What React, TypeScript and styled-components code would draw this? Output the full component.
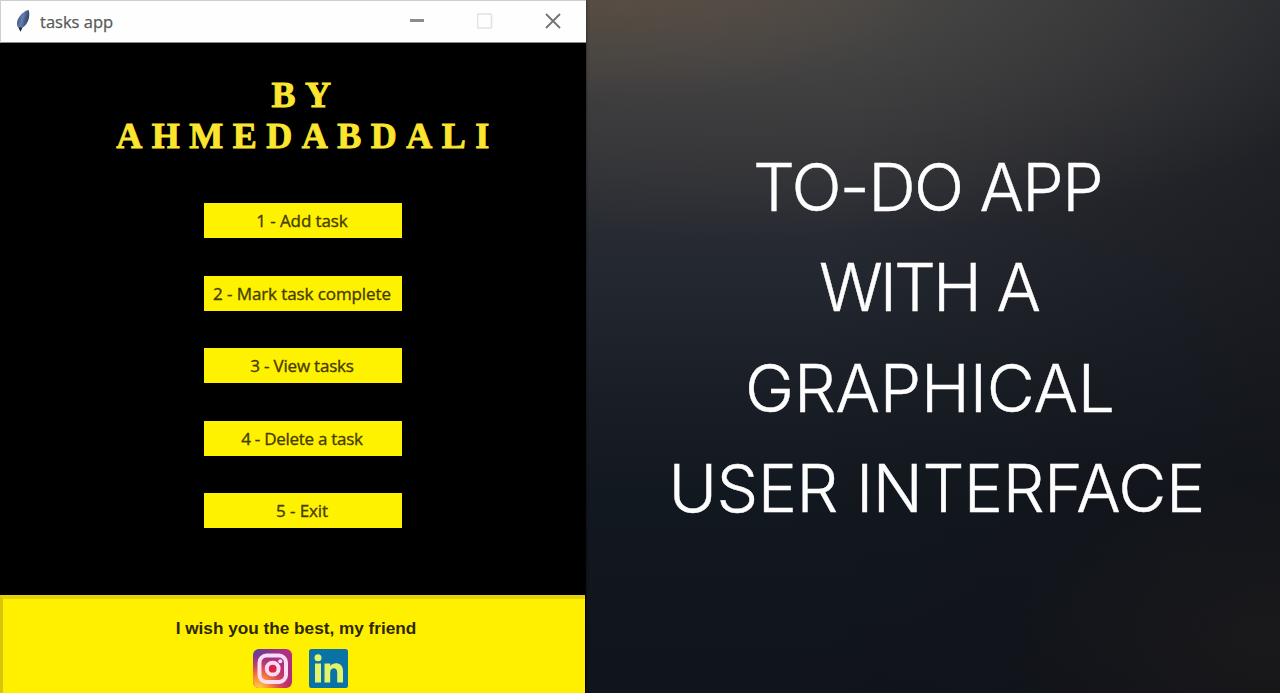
import React from "react";
import styled, { createGlobalStyle } from "styled-components";

const Global = createGlobalStyle`
  * { box-sizing: border-box; }
  body { margin: 0; background: #11151c; overflow: hidden; }
`;

const Page = styled.div`
  display: flex;
  width: 1280px;
  height: 693px;
  background:
    radial-gradient(ellipse 330px 110px at 600px -10px, rgba(100, 82, 66, 0.6), rgba(90, 80, 70, 0) 100%),
    radial-gradient(ellipse 720px 270px at 740px -30px, rgba(88, 82, 74, 0.75), rgba(70, 70, 72, 0) 100%),
    radial-gradient(ellipse 260px 160px at 1270px 640px, rgba(38, 33, 32, 0.4), rgba(40, 34, 32, 0) 100%),
    linear-gradient(100deg, rgba(18, 18, 22, 0) 62%, rgba(18, 18, 22, 0.6) 100%),
    linear-gradient(180deg, #31363d 0, #2d2f35 160px, #23272f 280px, #191e26 400px, #12181f 500px, #10141b 693px);
`;

const AppWindow = styled.section`
  display: flex;
  flex-direction: column;
  width: 586px;
  height: 693px;
  background: #000;
  box-shadow: 0 0 3px rgba(0, 0, 0, 0.6);
`;

const TitleBar = styled.header`
  display: flex;
  align-items: center;
  height: 43px;
  padding: 0 25px 2px 15px;
  background: #fefefe;
  border-top: 1px solid #cfcccb;
  border-left: 1px solid #cfcfcf;
  border-bottom: 1px solid #8a8a8a;
`;

const AppName = styled.h1`
  flex: 1;
  margin: 0 0 0 9px;
  padding-top: 2px;
  font: 400 16.5px/22px "Open Sans", "Noto Sans", sans-serif;
  color: #585858;
  -webkit-text-stroke: 0.25px #585858;
`;

const Controls = styled.div`
  display: flex;
  align-items: center;
  gap: 52px;
`;

const Body = styled.main`
  display: flex;
  flex-direction: column;
  align-items: center;
  height: 552px;
  padding-left: 20px;
`;

const Author = styled.h2`
  margin: 32px 0 0;
  font: 700 36px/41px "Liberation Serif", serif;
  letter-spacing: 9.5px;
  text-align: center;
  color: #fbe52f;
  -webkit-text-stroke: 0.9px #fbe52f;
`;

const AuthorLine = styled.span<{ $lead: number }>`
  display: block;
  padding-left: ${(p) => p.$lead}px;
`;

const Menu = styled.nav`
  display: flex;
  flex-direction: column;
  gap: 37.5px;
  margin-top: 46px;
`;

const TaskButton = styled.button<{ $spacing: number }>`
  width: 198px;
  height: 35px;
  padding: 0 2px 0 0;
  border: 0;
  background: #fff200;
  font: 500 17px/35px "Open Sans", "Noto Sans", sans-serif;
  letter-spacing: ${(p) => p.$spacing}px;
  white-space: nowrap;
  color: #463c00;
  -webkit-text-stroke: 0.35px #463c00;
`;

const Footer = styled.footer`
  display: flex;
  flex-direction: column;
  align-items: center;
  width: 585px;
  height: 98px;
  padding: 17px 0 0 4px;
  background: #fff000;
  border-top: 4px solid #e3d10a;
  border-left: 3px solid #d8c60a;
`;

const Wish = styled.p`
  margin: 0;
  font: 700 17.2px/24px "Liberation Sans", sans-serif;
  color: #2e2800;
`;

const Socials = styled.div`
  display: flex;
  gap: 17px;
  margin-top: 9px;
  padding-left: 9px;
`;

const Hero = styled.section`
  flex: 1;
  padding-top: 137px;
`;

const HeroLine = styled.div<{ $indent: number; $letter: number; $word: number }>`
  padding-left: ${(p) => p.$indent}px;
  font: 300 66px/100.3px Inter, "Liberation Sans", sans-serif;
  letter-spacing: ${(p) => p.$letter}px;
  word-spacing: ${(p) => p.$word}px;
  white-space: nowrap;
  color: #fdfdfe;
  -webkit-text-stroke: 0.4px #fdfdfe;
`;

const Feather = () => (
  <svg width="15" height="24" viewBox="0 0 15 24">
    <defs>
      <linearGradient id="quill" x1="0" y1="0" x2="1" y2="0.4">
        <stop offset="0" stopColor="#2d3c68" />
        <stop offset="0.5" stopColor="#6580ae" />
        <stop offset="1" stopColor="#2b3a5e" />
      </linearGradient>
    </defs>
    <path d="M12.500 1C8 1.500 3 7 1.300 12C.6 15 1 18 3 19.500L4.500 22.500L6 19C9 17.500 11.500 14 12.500 10.500C13.500 7 13.500 2.500 12.500 1Z" fill="url(#quill)" />
    <path d="M2.500 18.500L4.500 22.800L6.300 18.500Z" fill="#18203c" />
  </svg>
);

const Minimize = () => (
  <svg width="15" height="15" viewBox="0 0 15 15">
    <path d="M0 7.500H14" stroke="#8c8c8c" strokeWidth="3" />
  </svg>
);

const Maximize = () => (
  <svg width="16" height="16" viewBox="0 0 16 16">
    <rect x="0.500" y="1" width="14" height="14" rx="1" fill="none" stroke="#e2e0e0" strokeWidth="1.500" />
  </svg>
);

const Close = () => (
  <svg width="16" height="16" viewBox="0 0 16 16">
    <path d="M1 1L15 15M15 1L1 15" stroke="#757575" strokeWidth="1.900" />
  </svg>
);

const Instagram = () => (
  <svg width="39" height="39" viewBox="0 0 39 39">
    <defs>
      <linearGradient id="insta" x1="0" y1="0" x2="1" y2="1">
        <stop offset="0" stopColor="#5a3f9c" />
        <stop offset="0.45" stopColor="#b02f86" />
        <stop offset="1" stopColor="#b52a72" />
      </linearGradient>
      <radialGradient id="glow" cx="0.15" cy="1" r="0.85">
        <stop offset="0" stopColor="#ffd23c" />
        <stop offset="0.4" stopColor="#f5793c" />
        <stop offset="1" stopColor="#e0304e" stopOpacity="0" />
      </radialGradient>
    </defs>
    <rect width="39" height="39" rx="6" fill="url(#insta)" />
    <rect width="39" height="39" rx="6" fill="url(#glow)" />
    <rect x="6.500" y="6.500" width="26.500" height="26.500" rx="7" fill="none" stroke="#fbdcf2" strokeWidth="4" />
    <circle cx="19.700" cy="19.700" r="5.900" fill="#d8234f" stroke="#fbdcf2" strokeWidth="4" />
    <circle cx="27.300" cy="12.200" r="2" fill="#fbdcf2" />
  </svg>
);

const LinkedIn = () => (
  <svg width="39" height="39" viewBox="0 0 39 39">
    <rect width="39" height="39" rx="2.500" fill="#0873a4" />
    <circle cx="9" cy="8.800" r="3.500" fill="#e2f56a" />
    <rect x="6" y="14.500" width="6" height="19" fill="#e2f56a" />
    <path d="M15.500 14.500H21.200V17C24 12.800 34 12.500 34 22V33.500H28.200V23.500C28.200 17.800 21.200 18.200 21.200 23.500V33.500H15.500Z" fill="#e2f56a" />
  </svg>
);

const tasks = [
  { label: "1 - Add task", spacing: -0.1 },
  { label: "2 - Mark task complete", spacing: -0.1 },
  { label: "3 - View tasks", spacing: -0.2 },
  { label: "4 - Delete a task", spacing: -0.27 },
  { label: "5 - Exit", spacing: -0.1 },
];

const headline = [
  { text: "TO-DO APP", indent: 167, letter: -1.6, word: 0 },
  { text: "WITH A", indent: 233, letter: -3, word: 2 },
  { text: "GRAPHICAL", indent: 159, letter: -0.2, word: 0 },
  { text: "USER INTERFACE", indent: 82.5, letter: -0.5, word: 0 },
];

export default function App() {
  return (
    <>
      <Global />
      <Page>
        <AppWindow>
          <TitleBar>
            <Feather />
            <AppName>tasks app</AppName>
            <Controls>
              <Minimize />
              <Maximize />
              <Close />
            </Controls>
          </TitleBar>
          <Body>
            <Author>
              <AuthorLine $lead={6}>BY</AuthorLine>
              <AuthorLine $lead={9}>AHMEDABDALI</AuthorLine>
            </Author>
            <Menu>
              {tasks.map((t) => (
                <TaskButton key={t.label} $spacing={t.spacing}>
                  {t.label}
                </TaskButton>
              ))}
            </Menu>
          </Body>
          <Footer>
            <Wish>I wish you the best, my friend</Wish>
            <Socials>
              <Instagram />
              <LinkedIn />
            </Socials>
          </Footer>
        </AppWindow>
        <Hero>
          {headline.map((l) => (
            <HeroLine key={l.text} $indent={l.indent} $letter={l.letter} $word={l.word}>
              {l.text}
            </HeroLine>
          ))}
        </Hero>
      </Page>
    </>
  );
}
